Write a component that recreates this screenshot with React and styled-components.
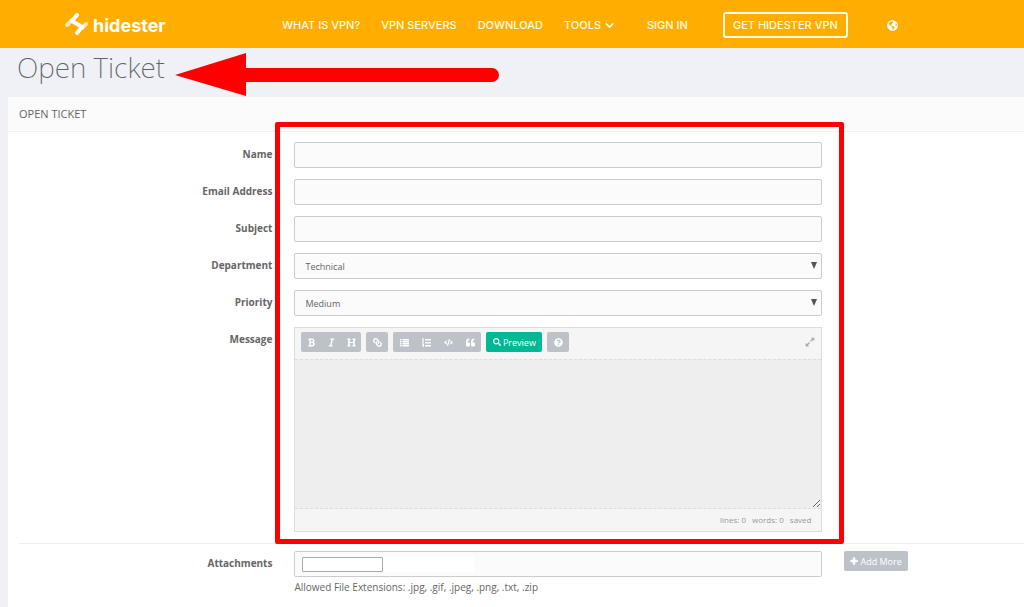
import React, { useState } from 'react';
import styled, { createGlobalStyle } from 'styled-components';
import {
  FaBold,
  FaCode,
  FaExpandAlt,
  FaGlobeAmericas,
  FaHeading,
  FaItalic,
  FaLink,
  FaPlus,
  FaQuestionCircle,
  FaQuoteLeft,
  FaSearch,
} from 'react-icons/fa';
import { FiChevronDown } from 'react-icons/fi';

const ListIcon = ({ size }) => (
  <svg width={size} height={size} viewBox="0 0 18 16" fill="currentColor">
    <path d="M0 1h3v3H0zM5 1h13v3H5zM0 5h3v3H0zM5 5h13v3H5zM0 9h3v3H0zM5 9h13v3H5zM0 13h3v3H0zM5 13h13v3H5z" />
  </svg>
);

const OrderedListIcon = ({ size }) => (
  <svg width={size} height={size} viewBox="0 0 18 18" fill="currentColor">
    <path d="M6 2h12v3H6zM6 8h12v3H6zM6 14h12v3H6zM1 0h2v5h1v1H0V5h1V2H0zM0 7h4v2L2 10h2v1H0V9l2-1H0zM0 12h4v6H0v-1h2v-1H1v-1h1v-1H0z" />
  </svg>
);

const textFields = [
  { id: 'name', label: 'Name', type: 'text' },
  { id: 'email', label: 'Email Address', type: 'email' },
  { id: 'subject', label: 'Subject', type: 'text' },
];

const selectFields = [
  { id: 'department', label: 'Department', options: ['Technical', 'Billing'] },
  { id: 'priority', label: 'Priority', options: ['Medium', 'High', 'Low'] },
];

const toolGroups = [
  {
    slot: 20,
    tools: [
      ['Bold', FaBold],
      ['Italic', FaItalic],
      ['Heading', FaHeading],
    ],
  },
  { slot: 22, tools: [['Link', (props) => <ChainIcon {...props} />]] },
  {
    slot: 22,
    tools: [
      ['List', ListIcon],
      ['Ordered list', OrderedListIcon],
      ['Code', FaCode],
      ['Quote', FaQuoteLeft],
    ],
  },
];

const Header = () => (
  <TopBar>
    <Brand href="#home">
      <svg width="24" height="24" viewBox="0 0 24 24" fill="none" strokeLinecap="round">
        <path d="M2 12L7 7M17 15L21 11" stroke="#ffe6b3" strokeWidth="4" />
        <path
          d="M12 2L7 8L17 14L12 20"
          stroke="#fff"
          strokeWidth="4"
          strokeLinejoin="round"
        />
      </svg>
      hidester
    </Brand>
    <Nav>
      <NavLink href="#what">WHAT IS VPN?</NavLink>
      <NavLink href="#servers">VPN SERVERS</NavLink>
      <NavLink href="#download">DOWNLOAD</NavLink>
      <NavLink href="#tools">
        TOOLS <FiChevronDown size={13} strokeWidth={3} />
      </NavLink>
    </Nav>
    <Account>
      <NavLink href="#signin">SIGN IN</NavLink>
      <GetButton href="#get">GET HIDESTER VPN</GetButton>
      <LanguageButton aria-label="Language">
        <FaGlobeAmericas size={11} />
      </LanguageButton>
    </Account>
  </TopBar>
);

const Editor = ({ value, onChange }) => (
  <EditorBox>
    <Toolbar>
      {toolGroups.map((group, index) => (
        <ToolGroup key={`group-${index}`}>
          {group.tools.map(([name, Icon]) => (
            <Tool type="button" key={name} aria-label={name} $slot={group.slot}>
              <Icon size={9} />
            </Tool>
          ))}
        </ToolGroup>
      ))}
      <ToolGroup $active>
        <Tool type="button" $slot={56}>
          <FaSearch size={8} /> Preview
        </Tool>
      </ToolGroup>
      <ToolGroup>
        <Tool type="button" aria-label="Help" $slot={22}>
          <FaQuestionCircle size={9} />
        </Tool>
      </ToolGroup>
      <ExpandButton type="button" aria-label="Fullscreen">
        <FaExpandAlt size={10} />
      </ExpandButton>
    </Toolbar>
    <MessageArea id="message" value={value} onChange={(e) => onChange(e.target.value)} />
    <EditorStatus>
      <span>lines: 0</span>
      <span>words: 0</span>
      <span>saved</span>
    </EditorStatus>
  </EditorBox>
);

const App = () => {
  const [message, setMessage] = useState('');

  return (
    <>
      <GlobalStyle />
      <Header />
      <TitleBar>
        <Title>Open Ticket</Title>
        <Arrow width="325" height="44" viewBox="0 0 325 44" aria-hidden="true">
          <path d="M0 22L71 0V15H317A7 7 0 0 1 317 29H71V43Z" fill="#f00" />
        </Arrow>
      </TitleBar>
      <Panel>
        <PanelHeading>OPEN TICKET</PanelHeading>
        <form>
          <FieldGrid>
            {textFields.map(({ id, label, type }) => (
              <React.Fragment key={id}>
                <Label htmlFor={id}>{label}</Label>
                <Input id={id} type={type} />
              </React.Fragment>
            ))}
            {selectFields.map(({ id, label, options }) => (
              <React.Fragment key={id}>
                <Label htmlFor={id}>{label}</Label>
                <SelectBox>
                  <Select id={id}>
                    {options.map((option) => (
                      <option key={option}>{option}</option>
                    ))}
                  </Select>
                  <SelectArrow viewBox="0 0 6 7" aria-hidden="true">
                    <path d="M0 0H6L3 7Z" fill="#555" />
                  </SelectArrow>
                </SelectBox>
              </React.Fragment>
            ))}
            <Label htmlFor="message">Message</Label>
            <Editor value={message} onChange={setMessage} />
            <Highlight />
          </FieldGrid>
          <Divider />
          <AttachmentGrid>
            <Label htmlFor="attachments">Attachments</Label>
            <div>
              <FileBox>
                <FileInput id="attachments" type="file" />
              </FileBox>
              <Hint>Allowed File Extensions: .jpg, .gif, .jpeg, .png, .txt, .zip</Hint>
            </div>
            <AddButton type="button">
              <FaPlus size={8} strokeWidth={60} stroke="currentColor" /> Add More
            </AddButton>
          </AttachmentGrid>
        </form>
      </Panel>
    </>
  );
};

const GlobalStyle = createGlobalStyle`
  * {
    box-sizing: border-box;
  }
  body {
    margin: 0;
    background: #f0f1f7;
    color: #666;
    font-family: 'Open Sans', 'Liberation Sans', sans-serif;
    font-size: 10px;
    overflow-x: hidden;
  }
  button, input, select, textarea {
    font-family: inherit;
    color: inherit;
  }
`;

const ChainIcon = styled(FaLink)`
  transform: scaleX(-1);
`;

const TopBar = styled.header`
  display: flex;
  align-items: center;
  height: 48px;
  padding: 2px 0 0 65px;
  background: #ffae00;
  color: #fff;
`;

const Brand = styled.a`
  display: flex;
  align-items: center;
  gap: 4px;
  width: 217px;
  color: inherit;
  font-family: Inter, sans-serif;
  font-size: 18px;
  font-weight: 700;
  text-decoration: none;
`;

const Nav = styled.nav`
  display: flex;
  gap: 21px;
`;

const Account = styled.div`
  display: flex;
  align-items: center;
  gap: 35px;
  margin-left: 31px;
`;

const NavLink = styled.a`
  display: flex;
  align-items: center;
  gap: 2px;
  color: #fffbe6;
  font-family: Inter, sans-serif;
  font-size: 11px;
  font-weight: 500;
  text-decoration: none;
  white-space: nowrap;
`;

const GetButton = styled(NavLink)`
  height: 26px;
  padding: 0 8px;
  border: 2px solid #fffbe6;
  border-radius: 3px;
`;

const LanguageButton = styled.button`
  display: flex;
  margin-left: 4px;
  padding: 0;
  border: 0;
  background: none;
`;

const TitleBar = styled.div`
  display: flex;
  align-items: flex-start;
  gap: 10px;
  height: 49px;
  padding: 0 17px;
`;

const Title = styled.h1`
  margin: 0;
  color: #5f6468;
  font-family: 'Noto Sans', sans-serif;
  font-size: 28px;
  font-weight: 200;
  line-height: 38px;
`;

const Arrow = styled.svg`
  margin-top: 5px;
`;

const Panel = styled.main`
  margin-left: 8px;
  min-height: 510px;
  background: #fff;
`;

const PanelHeading = styled.h2`
  margin: 0;
  padding: 0 11px;
  border-bottom: 1px solid #f0f0f0;
  background: #fbfbfb;
  font-size: 11px;
  font-weight: 400;
  line-height: 34px;
`;

const FieldGrid = styled.div`
  position: relative;
  display: grid;
  grid-template-columns: 24fr 50fr 17fr;
  gap: 11px 22px;
  padding: 10px 0 11px 11px;

  > * {
    grid-column: 2;
  }
`;

const Label = styled.label`
  grid-column: 1;
  font-weight: 700;
  line-height: 24px;
  text-align: right;
`;

const Input = styled.input`
  height: 26px;
  padding: 0 10px;
  border: 1px solid #ccc;
  border-radius: 2px;
  background: #fbfbfb;
  font-size: 10px;
`;

const SelectBox = styled.div`
  position: relative;
`;

const Select = styled.select`
  display: block;
  width: 100%;
  height: 26px;
  padding: 0 10px;
  appearance: none;
  border: 1px solid #ccc;
  border-radius: 2px;
  background: #fbfbfb;
  font-size: 9px;
`;

const SelectArrow = styled.svg`
  position: absolute;
  top: 9px;
  right: 5px;
  width: 6px;
  height: 7px;
  pointer-events: none;
`;

const Highlight = styled.div`
  position: absolute;
  grid-row: 1 / 7;
  grid-column: 2 / 3;
  inset: -20px -22px -12px -19px;
  border: 5px solid #f00;
  border-radius: 2px;
  pointer-events: none;
`;

const EditorBox = styled.div`
  border: 1px solid #ddd;
  background: #f5f5f5;
`;

const Toolbar = styled.div`
  display: flex;
  gap: 5px;
  padding: 4px 6px 7px;
`;

const ToolGroup = styled.div`
  display: flex;
  border-radius: 2px;
  background: ${({ $active }) => ($active ? '#00b894' : '#bcc2c8')};
  color: #fff;
`;

const Tool = styled.button`
  display: flex;
  align-items: center;
  justify-content: center;
  gap: 2px;
  width: ${({ $slot }) => $slot}px;
  height: 20px;
  padding: 0;
  border: 0;
  background: none;
  font-size: 9px;
`;

const ExpandButton = styled.button`
  margin-left: auto;
  padding: 0;
  border: 0;
  background: none;
  color: #aaa;
`;

const MessageArea = styled.textarea`
  display: block;
  width: 100%;
  height: 150px;
  padding: 8px;
  border: 1px dashed #ddd;
  border-width: 1px 0;
  background: #eee;
  resize: vertical;
`;

const EditorStatus = styled.div`
  display: flex;
  justify-content: flex-end;
  gap: 6px;
  padding: 0 10px;
  color: #999;
  font-size: 8px;
  line-height: 22px;
`;

const Divider = styled.hr`
  margin: 0 0 0 11px;
  border: 0;
  border-top: 1px solid #eee;
`;

const AttachmentGrid = styled(FieldGrid)`
  padding: 7px 0 11px 11px;

  > button {
    grid-column: 3;
  }
`;

const FileBox = styled.div`
  display: flex;
  align-items: center;
  height: 26px;
  padding: 0 7px;
  border: 1px solid #ccc;
  border-radius: 2px;
  background: #fbfbfb;
`;

const FileInput = styled.input`
  width: 172px;
  background: #fff;
  color: transparent;
  font-size: 8px;

  &::file-selector-button {
    width: 81px;
    height: 15px;
    border: 1px solid #aaa;
    border-radius: 1px;
    background: #fff;
    color: transparent;
  }
`;

const Hint = styled.p`
  margin: 0;
  line-height: 20px;
`;

const AddButton = styled.button`
  display: flex;
  align-items: center;
  justify-content: center;
  justify-self: start;
  gap: 2px;
  height: 20px;
  padding: 0 6px;
  border: 0;
  border-radius: 2px;
  background: #bcc2c8;
  color: #fff;
  font-size: 9px;
`;

export default App;
